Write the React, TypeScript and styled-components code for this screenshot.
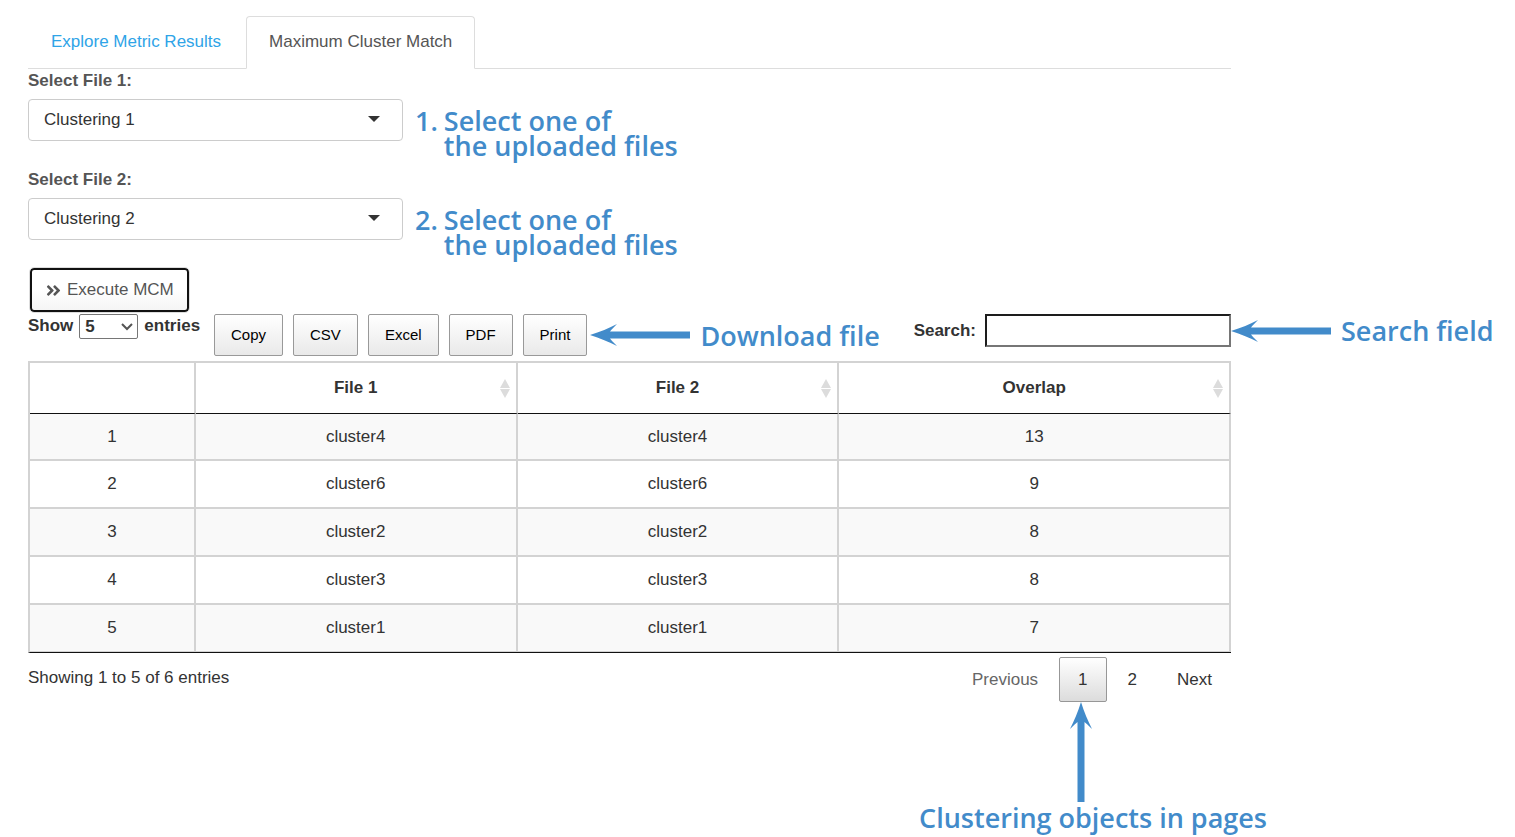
import React, { useState } from "react";
import styled, { createGlobalStyle, css } from "styled-components";
import { FaAngleDoubleRight } from "react-icons/fa";

const GlobalStyle = createGlobalStyle`
  *, *::before, *::after { box-sizing: border-box; }
  body {
    margin: 0;
    background: #fff;
    color: #333;
    font: 17px/24px "Liberation Sans", Arial, sans-serif;
  }
  button, select, input { font: inherit; margin: 0; }
`;

const Page = styled.div`
  display: grid;
  grid-template-columns: minmax(0, 1fr) 284px;
  align-content: start;
  min-height: 100vh;
  padding: 16px 0 0 28px;
`;

const Main = styled.div`
  grid-column: 1;
  min-width: 0;
`;

const Tabs = styled.nav`
  display: flex;
  gap: 2px;
  border-bottom: 1px solid #ddd;
`;

const Tab = styled.a<{ $active?: boolean }>`
  height: 53px;
  margin-bottom: -1px;
  padding: 0 22px;
  border: 1px solid transparent;
  border-radius: 4px 4px 0 0;
  line-height: 50px;
  color: #2fa4e7;
  text-decoration: none;
  ${({ $active }) =>
    $active &&
    css`
      color: #555;
      background: #fff;
      border-color: #ddd #ddd #fff;
    `}
`;

const Field = styled.div`
  padding-bottom: 10px;
`;

const FieldLabel = styled.label`
  display: block;
  height: 30px;
  line-height: 24px;
  font-weight: 700;
  color: #555;
`;

const FieldRow = styled.div`
  display: flex;
  align-items: flex-start;
  gap: 12px;
`;

const SelectBox = styled.div`
  position: relative;
  width: 375px;
`;

const FileSelect = styled.select`
  width: 100%;
  height: 42px;
  padding: 0 15px;
  appearance: none;
  border: 1px solid #ccc;
  border-radius: 4px;
  background: #fff;
  color: #333;
`;

const Caret = styled.svg`
  position: absolute;
  top: 17px;
  right: 23px;
  pointer-events: none;
`;

const Note = styled.p`
  display: flex;
  gap: 6px;
  margin: 0;
  color: #428bca;
  font: 600 27px/25px "Open Sans", sans-serif;
  white-space: nowrap;
`;

const StepNote = styled(Note)`
  padding-top: 9px;
`;

const ExecuteButton = styled.button`
  display: flex;
  align-items: center;
  gap: 5px;
  height: 44px;
  margin: 1px 0 2px 2px;
  padding: 0 13px;
  border: 2px solid #111;
  border-radius: 4px;
  outline: 1px solid #ddd;
  background: linear-gradient(#fff 50%, #f5f5f5);
  color: #555;
`;

const Toolbar = styled(Main)`
  display: flex;
  align-items: flex-start;
`;

const LengthLabel = styled.label`
  display: flex;
  gap: 6px;
  width: 186px;
  font-weight: 700;
`;

const LengthSelectBox = styled.span`
  position: relative;
`;

const LengthSelect = styled.select`
  width: 59px;
  height: 25px;
  padding: 0 5px;
  appearance: none;
  border: 1px solid #767676;
  border-radius: 2px;
  background: #fff;
  color: #333;
`;

const Chevron = styled.svg`
  position: absolute;
  top: 9px;
  right: 5px;
  pointer-events: none;
`;

const ExportButtons = styled.div`
  display: flex;
  gap: 10px;
  margin-right: 3px;
`;

const ExportButton = styled.button`
  height: 42px;
  padding: 0 16px;
  border: 1px solid #999;
  border-radius: 2px;
  background: linear-gradient(#fff, #e9e9e9);
  color: #000;
  font-size: 15px;
`;

const ArrowNote = styled(Note)`
  align-items: center;
  gap: 10px;
  height: 42px;
`;

const SearchNote = styled(ArrowNote)`
  grid-column: 2;
  height: 33px;
`;

const SearchLabel = styled.label`
  display: flex;
  align-items: center;
  gap: 9px;
  margin-left: auto;
  font-weight: 700;
`;

const SearchInput = styled.input`
  width: 246px;
  height: 33px;
  padding: 4px;
  border: 2px solid;
  border-color: #1d1d1d #767676 #767676 #1d1d1d;
  background: #fff;
`;

const Table = styled.table`
  width: 100%;
  margin-top: 5px;
  table-layout: fixed;
  border-collapse: separate;
  border-spacing: 0;
  border: solid #d3d3d3;
  border-width: 2px 0 0 2px;
  border-bottom: 1px solid #111;
  text-align: center;
`;

const HeadCell = styled.th<{ $width?: string }>`
  position: relative;
  width: ${({ $width }) => $width ?? "auto"};
  height: 51px;
  padding: 0;
  border-right: 2px solid #d3d3d3;
  border-bottom: 1px solid #111;
`;

const SortMark = styled.svg`
  position: absolute;
  top: 16px;
  right: 5px;
`;

const Cell = styled.td`
  height: 48px;
  padding: 0;
  border-right: 2px solid #d3d3d3;
  border-bottom: 2px solid #d3d3d3;
`;

const Row = styled.tr`
  &:nth-child(odd) { background: #f9f9f9; }
  &:first-child ${Cell} { height: 47px; }
  &:last-child ${Cell} { height: 47px; border-bottom-width: 1px; }
`;

const Footer = styled(Main)`
  display: flex;
  justify-content: space-between;
  align-items: flex-start;
  padding-top: 4px;
`;

const Info = styled.div`
  padding-top: 9px;
`;

const Pager = styled.nav`
  display: flex;
  gap: 2px;
`;

const PageButton = styled.button<{ $current?: boolean }>`
  min-width: 47px;
  height: 45px;
  padding: 0 18px;
  border: 1px solid transparent;
  border-radius: 2px;
  background: transparent;
  color: #333;
  &:disabled { color: #666; }
  ${({ $current }) =>
    $current &&
    css`
      border-color: #979797;
      background: linear-gradient(#fff, #dcdcdc);
    `}
`;

const PagerNote = styled(Note)`
  grid-column: 1 / -1;
  flex-direction: column;
  align-items: flex-end;
  gap: 3px;
  padding-right: 248px;
`;

const UpArrow = styled.svg`
  margin-right: 175px;
`;

const LeftArrow = () => (
  <svg width="100" height="22" viewBox="0 0 100 22" fill="#428bca" aria-hidden="true">
    <path d="M0 11C10 8 19 4 27 0Q22 5 20 7.5H100V14.5H20Q22 17 27 22C19 18 10 14 0 11Z" />
  </svg>
);

const SortIcon = () => (
  <SortMark width="12" height="20" viewBox="0 0 12 20" fill="#dcdcdc" aria-hidden="true">
    <path d="M6 0L11 9H1ZM1 10H11L6 19Z" />
  </SortMark>
);

const files = ["Clustering 1", "Clustering 2"];
const matches = [
  ["cluster4", "cluster4", 13],
  ["cluster6", "cluster6", 9],
  ["cluster2", "cluster2", 8],
  ["cluster3", "cluster3", 8],
  ["cluster1", "cluster1", 7],
];

function FileField({ index }: { index: number }) {
  const [file, setFile] = useState(files[index - 1]);
  const id = `file-${index}`;
  return (
    <Field>
      <FieldLabel htmlFor={id}>Select File {index}:</FieldLabel>
      <FieldRow>
        <SelectBox>
          <FileSelect id={id} value={file} onChange={(e) => setFile(e.target.value)}>
            {files.map((name) => (
              <option key={name}>{name}</option>
            ))}
          </FileSelect>
          <Caret width="12" height="6" viewBox="0 0 12 6" fill="#333" aria-hidden="true">
            <path d="M0 0H12L6 6Z" />
          </Caret>
        </SelectBox>
        <StepNote>
          <span>{index}.</span>
          <span>
            Select one of
            <br />
            the uploaded files
          </span>
        </StepNote>
      </FieldRow>
    </Field>
  );
}

export default function App() {
  return (
    <>
      <GlobalStyle />
      <Page>
        <Main>
          <Tabs>
            <Tab href="#explore">Explore Metric Results</Tab>
            <Tab href="#mcm" $active>
              Maximum Cluster Match
            </Tab>
          </Tabs>
          <FileField index={1} />
          <FileField index={2} />
          <ExecuteButton type="button">
            <FaAngleDoubleRight size={17} />
            Execute MCM
          </ExecuteButton>
        </Main>

        <Toolbar>
          <LengthLabel>
            Show
            <LengthSelectBox>
              <LengthSelect defaultValue="5">
                <option>5</option>
                <option>10</option>
              </LengthSelect>
              <Chevron width="12" height="8" viewBox="0 0 12 8" fill="none" stroke="#555" strokeWidth="2" aria-hidden="true">
                <path d="M1 1L6 6L11 1" />
              </Chevron>
            </LengthSelectBox>
            entries
          </LengthLabel>
          <ExportButtons>
            {["Copy", "CSV", "Excel", "PDF", "Print"].map((name) => (
              <ExportButton key={name} type="button">
                {name}
              </ExportButton>
            ))}
          </ExportButtons>
          <ArrowNote>
            <LeftArrow />
            Download file
          </ArrowNote>
          <SearchLabel>
            Search:
            <SearchInput type="search" />
          </SearchLabel>
        </Toolbar>
        <SearchNote>
          <LeftArrow />
          Search field
        </SearchNote>

        <Main>
          <Table>
            <thead>
              <tr>
                <HeadCell $width="13.8%" aria-label="Row" />
                <HeadCell $width="26.8%" scope="col">
                  File 1<SortIcon />
                </HeadCell>
                <HeadCell $width="26.8%" scope="col">
                  File 2<SortIcon />
                </HeadCell>
                <HeadCell scope="col">
                  Overlap
                  <SortIcon />
                </HeadCell>
              </tr>
            </thead>
            <tbody>
              {matches.map(([first, second, overlap], i) => (
                <Row key={first}>
                  <Cell>{i + 1}</Cell>
                  <Cell>{first}</Cell>
                  <Cell>{second}</Cell>
                  <Cell>{overlap}</Cell>
                </Row>
              ))}
            </tbody>
          </Table>
        </Main>

        <Footer>
          <Info>Showing 1 to 5 of 6 entries</Info>
          <Pager aria-label="Pages">
            <PageButton type="button" disabled>
              Previous
            </PageButton>
            <PageButton type="button" $current>
              1
            </PageButton>
            <PageButton type="button">2</PageButton>
            <PageButton type="button">Next</PageButton>
          </Pager>
        </Footer>
        <PagerNote>
          <UpArrow width="22" height="100" viewBox="0 0 22 100" fill="#428bca" aria-hidden="true">
            <path d="M11 0C8 10 4 19 0 27Q5 22 7.5 20V100H14.5V20Q17 22 22 27C18 19 14 10 11 0Z" />
          </UpArrow>
          Clustering objects in pages
        </PagerNote>
      </Page>
    </>
  );
}
